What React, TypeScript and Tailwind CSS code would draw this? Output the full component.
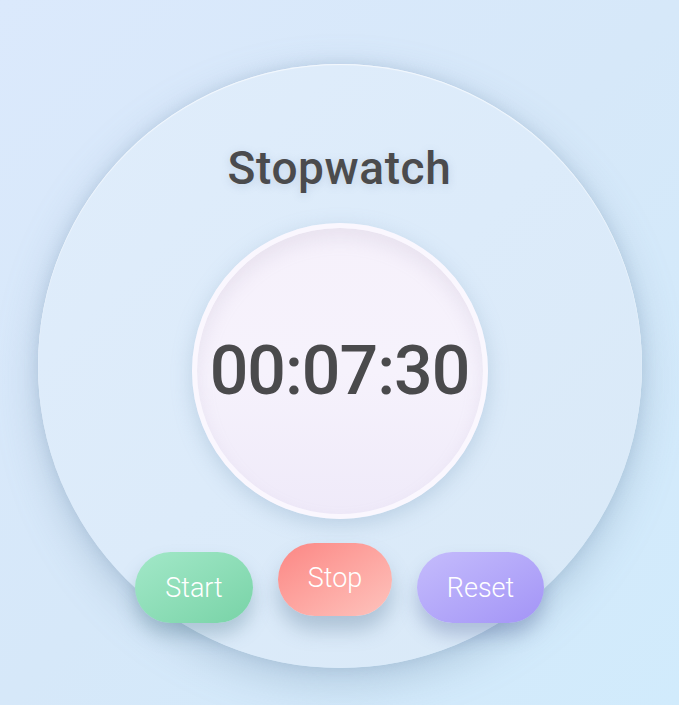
import React from "react";

const font = { fontFamily: "Roboto, 'Noto Sans', sans-serif" };

function PillButton({
  label,
  className,
}: {
  label: string;
  className: string;
}) {
  return (
    <button
      type="button"
      className={`flex items-center justify-center rounded-full text-[27px] font-light leading-none text-white ${className}`}
      style={font}
    >
      {label}
    </button>
  );
}

export default function App() {
  return (
    <div
      className="flex h-[705px] w-[679px] justify-center overflow-hidden bg-gradient-to-br from-[#dbe9fc] via-[#d6e8f9] to-[#d1ebfc]"
      style={font}
    >
      {/* outer dial */}
      <div className="mt-[64px] flex h-[604px] w-[604px] flex-col items-center rounded-full bg-gradient-to-br from-[#e0edfb] via-[#dcebfa] to-[#d9e9f7] pt-[81px] shadow-[0_14px_40px_rgba(120,150,180,0.38),0_0_14px_rgba(120,150,185,0.25),inset_0_1px_1px_rgba(255,255,255,0.7)]">
        <h1 className="text-[46px] font-medium leading-none tracking-[0.6px] text-[#4b4b4d] [text-shadow:0_2px_8px_rgba(120,140,170,0.25)]">
          Stopwatch
        </h1>

        {/* time face */}
        <div className="mt-[32px] flex h-[296px] w-[296px] items-center justify-center rounded-full border-[5px] border-[#faf7fe] bg-gradient-to-b from-[#f6f1fb] via-[#f6f2fc] to-[#efeaf9] shadow-[0_6px_20px_rgba(130,160,190,0.35),inset_0_10px_18px_rgba(170,160,190,0.18)]">
          <span className="text-[68px] font-medium leading-none tracking-[-1px] text-[#4a4a4c]">
            00:07:30
          </span>
        </div>

        {/* controls */}
        <div className="mt-[24px] flex items-start gap-[25px]">
          <PillButton
            label="Start"
            className="mt-[9px] h-[71px] w-[118px] bg-gradient-to-br from-[#a2e8c8] to-[#78d3a7] pt-[1px] shadow-[0_12px_18px_rgba(90,130,150,0.35)]"
          />
          <PillButton
            label="Stop"
            className="h-[73px] w-[114px] bg-gradient-to-br from-[#fb8684] to-[#fdc3bd] pb-[3px] shadow-[0_14px_20px_rgba(90,120,150,0.35)]"
          />
          <PillButton
            label="Reset"
            className="mt-[9px] h-[71px] w-[127px] bg-gradient-to-br from-[#c5bcfc] to-[#a394f6] pt-[1px] shadow-[0_12px_18px_rgba(90,110,160,0.35)]"
          />
        </div>
      </div>
    </div>
  );
}
